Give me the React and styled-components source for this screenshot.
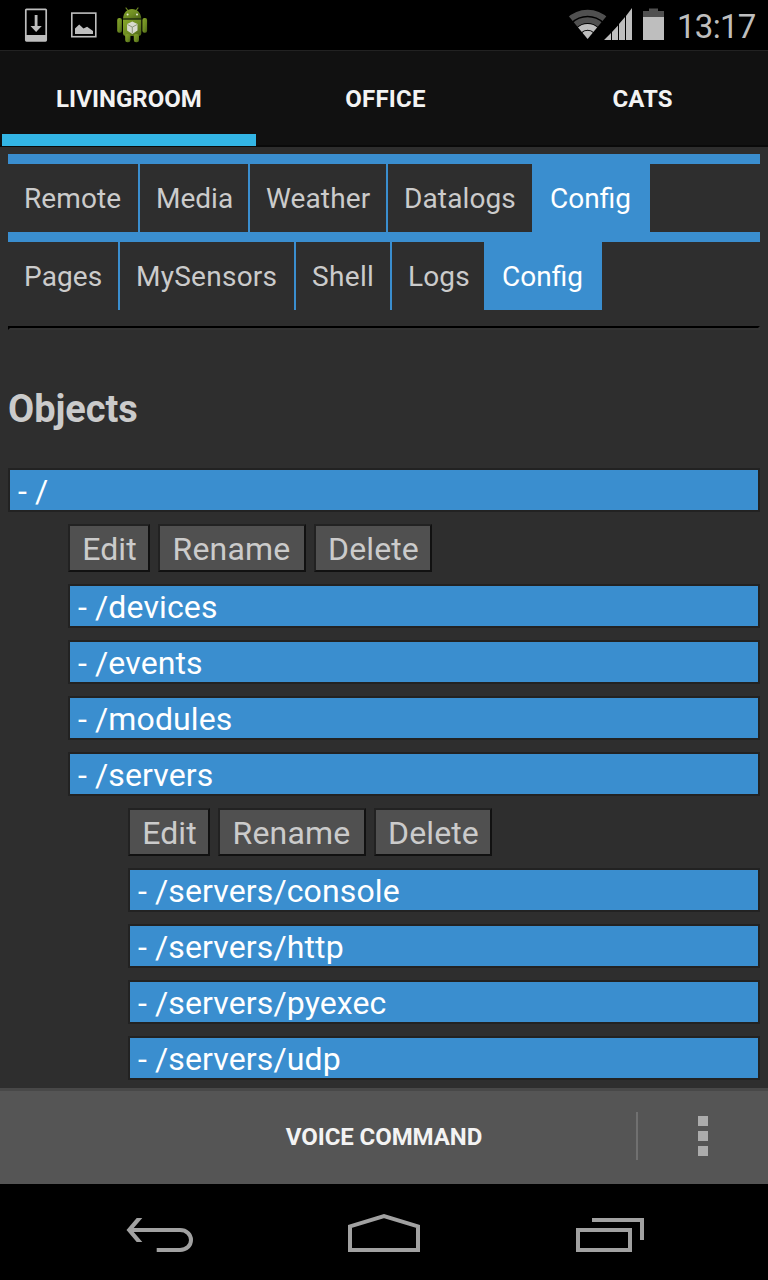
import React from 'react';
import styled, { createGlobalStyle } from 'styled-components';

const GlobalStyle = createGlobalStyle`
  * { box-sizing: border-box; }
  body { margin: 0; background: #000; font-family: Roboto, "Liberation Sans", sans-serif; }
`;

const Screen = styled.div`
  width: 768px;
  height: 1280px;
  display: flex;
  flex-direction: column;
  background: #2e2e2e;
  overflow: hidden;
`;

const StatusBar = styled.header`
  height: 50px;
  flex: none;
  display: flex;
  justify-content: space-between;
  background: #000;
`;

const StatusGroup = styled.div`
  display: flex;
`;

const Clock = styled.time`
  width: 92px;
  padding-left: 1px;
  font-size: 33px;
  line-height: 53px;
  letter-spacing: -0.7px;
  color: #bebebe;
  white-space: nowrap;
`;

const RoomTabs = styled.nav`
  height: 97px;
  flex: none;
  display: flex;
  background: #111;
  border-top: 1px solid #222;
  border-bottom: 2px solid #0a0a0a;
`;

const RoomTab = styled.a`
  flex: ${(p) => p.$width} 0 0;
  display: flex;
  flex-direction: column;
  align-items: center;
  position: relative;
  font-size: 24px;
  font-weight: 700;
  line-height: 96px;
  height: 94px;
  letter-spacing: ${(p) => p.$spacing || 0}px;
  text-indent: ${(p) => p.$shift || 0}px;
  color: #f3f3f3;
  & + &::before {
    content: '';
    position: absolute;
    left: -1px;
    top: 23px;
    width: 2px;
    height: 48px;
    background: #303030;
  }
  &::after {
    content: '';
    display: ${(p) => (p.$active ? 'block' : 'none')};
    position: absolute;
    left: 2px;
    right: 1px;
    bottom: -1px;
    height: 12px;
    background: #33b5e5;
  }
`;

const Page = styled.main`
  flex: 1;
  padding: 7px 8px 0;
  overflow: hidden;
`;

const PageTabs = styled.nav`
  display: flex;
  height: 78px;
  border-top: 10px solid #3a8ecf;
`;

const PageTab = styled.a`
  width: ${(p) => p.$width}px;
  padding-left: 16px;
  border-right: ${(p) => (p.$active ? 0 : 2)}px solid #3a8ecf;
  background: ${(p) => (p.$active ? '#3a8ecf' : 'transparent')};
  color: ${(p) => (p.$active ? '#fff' : '#cbcbcb')};
  font-size: 28px;
  line-height: 69px;
  letter-spacing: ${(p) => p.$spacing ?? 0.12}px;
  white-space: nowrap;
`;

const Rule = styled.hr`
  margin: 16px 0 0;
  height: 4px;
  border: 2px solid;
  border-color: #000 #333 #333 #000;
`;

const Heading = styled.h3`
  margin: 57px 0 37px;
  font-size: 38px;
  line-height: 44px;
  letter-spacing: -0.05px;
  color: #cbcbcb;
`;

const Tree = styled.div`
  display: flex;
  flex-direction: column;
  gap: 12px;
`;

const Branch = styled(Tree)`
  padding-left: 60px;
`;

const Node = styled.div`
  height: 44px;
  padding-left: 8px;
  border: 2px solid #222;
  background: #3a8ecf;
  color: #fff;
  font-size: 32px;
  line-height: 42px;
  letter-spacing: 0.12px;
  white-space: nowrap;
`;

const Actions = styled.div`
  display: flex;
  gap: 8px;
`;

const ActionButton = styled.button`
  width: ${(p) => p.$width}px;
  height: 48px;
  padding: 2px 0 0;
  border: 2px solid;
  border-color: #222 #111 #111 #222;
  background: #505050;
  color: #cbcbcb;
  font-family: inherit;
  font-size: 32px;
  line-height: 42px;
  letter-spacing: ${(p) => p.$spacing ?? 0.1}px;
  text-indent: ${(p) => p.$shift || 0}px;
  white-space: nowrap;
`;

const CommandBar = styled.footer`
  height: 96px;
  flex: none;
  display: flex;
  align-items: center;
  padding-bottom: 2px;
  background: #555;
  border-top: 3px solid #484848;
`;

const VoiceCommand = styled.a`
  width: 636px;
  padding-left: 132px;
  text-align: center;
  font-size: 24px;
  font-weight: 700;
  letter-spacing: -0.08px;
  color: #f3f3f3;
`;

const Divider = styled.div`
  width: 2px;
  height: 48px;
  margin-top: -1px;
  background: #707070;
`;

const Overflow = styled.div`
  flex: 1;
  display: flex;
  flex-direction: column;
  align-items: center;
  gap: 5px;
  margin-top: -1px;
`;

const Dot = styled.i`
  width: 10px;
  height: 10px;
  background: #acacac;
`;

const SystemNav = styled.nav`
  height: 96px;
  flex: none;
  background: #000;
`;

const NotificationIcons = () => (
  <svg width="160" height="50" viewBox="0 0 160 50">
    <rect x="25.8" y="9.3" width="20.4" height="31.5" rx="0.7" fill="none" stroke="#bebebe" strokeWidth="1.7" />
    <path d="M26 35h20v6H26zM34.7 15h2.8v11h4.3L36.1 32l-5.6-6h4.2z" fill="#bebebe" />
    <rect x="71.8" y="13.1" width="24" height="23.6" fill="none" stroke="#bebebe" strokeWidth="1.6" />
    <path d="M75 34v-5.5l4.2-4 4.3 4.1 3.6-1.9 5.9 4.2V34z" fill="#bebebe" />
    <defs>
      <linearGradient id="droid" x1="0" y1="0" x2="1" y2="1">
        <stop offset="0" stopColor="#86a62a" />
        <stop offset="0.55" stopColor="#6d8b22" />
        <stop offset="1" stopColor="#4a6216" />
      </linearGradient>
    </defs>
    <path d="M126 8l3 4M138 8l-3 4" stroke="#718b25" strokeWidth="1.2" strokeLinecap="round" />
    <g fill="url(#droid)">
      <path d="M123 18.5c.4-5.9 4-9.5 9-9.5s8.9 3.6 9.3 9.500z" />
      <path d="M123 19.6h18.300v14q0 2.400-2.400 2.400h-13.500q-2.400 0-2.400-2.400z" />
      <rect x="117.2" y="18" width="4.7" height="14.7" rx="2" />
      <rect x="142.4" y="18" width="4.7" height="14.7" rx="2" />
      <rect x="125.2" y="34" width="5.2" height="8.3" rx="2.2" />
      <rect x="133.8" y="34" width="5.2" height="8.3" rx="2.2" />
    </g>
    <path d="M123 19.1h18.3" stroke="#354817" />
    <circle cx="127.6" cy="14.5" r="1" fill="#e5e8d8" />
    <circle cx="137" cy="14.5" r="1" fill="#e5e8d8" />
    <path d="M132.3 21.6l5.200 2.500v6.300l-5.200 3.500-5.200-3.500v-6.300z" fill="#d8dacf" />
    <path d="M127.500 24.500l4.800 2.600 4.900-2.600M132.300 27.100v6" fill="none" stroke="#849071" strokeWidth="0.9" />
  </svg>
);

const SignalIcons = () => (
  <svg width="110" height="50" viewBox="566 0 110 50">
    <defs>
      <clipPath id="fan"><path d="M587.6 39L566.5 13.4V5h42.2v8.400z" /></clipPath>
    </defs>
    <g clipPath="url(#fan)">
      <g fill="none" stroke="#505050">
        <circle cx="587.6" cy="39" r="26.2" strokeWidth="6" />
        <circle cx="587.6" cy="39" r="18.900" strokeWidth="5.8" />
      </g>
      <circle cx="587.6" cy="39" r="12.2" fill="none" stroke="#bebebe" strokeWidth="5.8" />
      <circle cx="587.6" cy="39" r="8.3" fill="#bebebe" />
    </g>
    <path d="M604 40l7-7v7zM612 32l6-6.5V40h-6zM619 24l6-7v23h-6zM626 16l6-8v32h-6z" fill="#bebebe" />
    <path d="M643 11h6V8.500h9V11h6v6h-21z" fill="#505050" />
    <path d="M643 17h21v23h-21z" fill="#bebebe" />
  </svg>
);

const SystemIcons = () => (
  <svg width="768" height="96" viewBox="0 0 768 96" fill="none" stroke="#a1a1a1" strokeWidth="4">
    <path d="M136.700 34H142.300L132 46L142.300 58H136.700L126.500 46z" fill="#a1a1a1" stroke="none" />
    <path d="M130 46h50c6.500 0 11 4.500 11 10s-4.500 10-11 10h-23.300" />
    <path d="M350 66V42.400L384 32.200L418 42.400V66z" />
    <path d="M592 36h50v20M578 46h52v20h-52z" />
  </svg>
);

const rooms = [
  { name: 'LIVINGROOM', width: 257, spacing: 0.03, shift: 1 },
  { name: 'OFFICE', width: 257, spacing: 0.2 },
  { name: 'CATS', width: 254, shift: 3 },
];

const pageTabs = [
  [['Remote', 132, 0.1], ['Media', 110, 0], ['Weather', 138], ['Datalogs', 146], ['Config', 116, 0]],
  [['Pages', 112], ['MySensors', 176, 0.26], ['Shell', 96, 0.35], ['Logs', 94], ['Config', 116, 0]],
];

const ObjectActions = () => (
  <Actions>
    <ActionButton $width={82} $shift={1}>Edit</ActionButton>
    <ActionButton $width={148} $shift={-1} $spacing={0.2}>Rename</ActionButton>
    <ActionButton $width={118} $shift={1}>Delete</ActionButton>
  </Actions>
);

export default function App() {
  return (
    <Screen>
      <GlobalStyle />
      <StatusBar>
        <StatusGroup><NotificationIcons /></StatusGroup>
        <StatusGroup><SignalIcons /><Clock>13:17</Clock></StatusGroup>
      </StatusBar>
      <RoomTabs>
        {rooms.map((r, i) => (
          <RoomTab key={r.name} $width={r.width} $spacing={r.spacing} $shift={r.shift} $active={i === 0}>
            {r.name}
          </RoomTab>
        ))}
      </RoomTabs>
      <Page>
        {pageTabs.map((row, i) => (
          <PageTabs key={i}>
            {row.map(([name, width, spacing]) => (
              <PageTab key={name} $width={width} $spacing={spacing} $active={name === 'Config'}>{name}</PageTab>
            ))}
          </PageTabs>
        ))}
        <Rule />
        <Heading>Objects</Heading>
        <Tree>
          <Node>- /</Node>
          <Branch>
            <ObjectActions />
            <Node>- /devices</Node>
            <Node>- /events</Node>
            <Node>- /modules</Node>
            <Node>- /servers</Node>
            <Branch>
              <ObjectActions />
              <Node>- /servers/console</Node>
              <Node>- /servers/http</Node>
              <Node>- /servers/pyexec</Node>
              <Node>- /servers/udp</Node>
            </Branch>
          </Branch>
        </Tree>
      </Page>
      <CommandBar>
        <VoiceCommand>VOICE COMMAND</VoiceCommand>
        <Divider />
        <Overflow><Dot /><Dot /><Dot /></Overflow>
      </CommandBar>
      <SystemNav><SystemIcons /></SystemNav>
    </Screen>
  );
}
